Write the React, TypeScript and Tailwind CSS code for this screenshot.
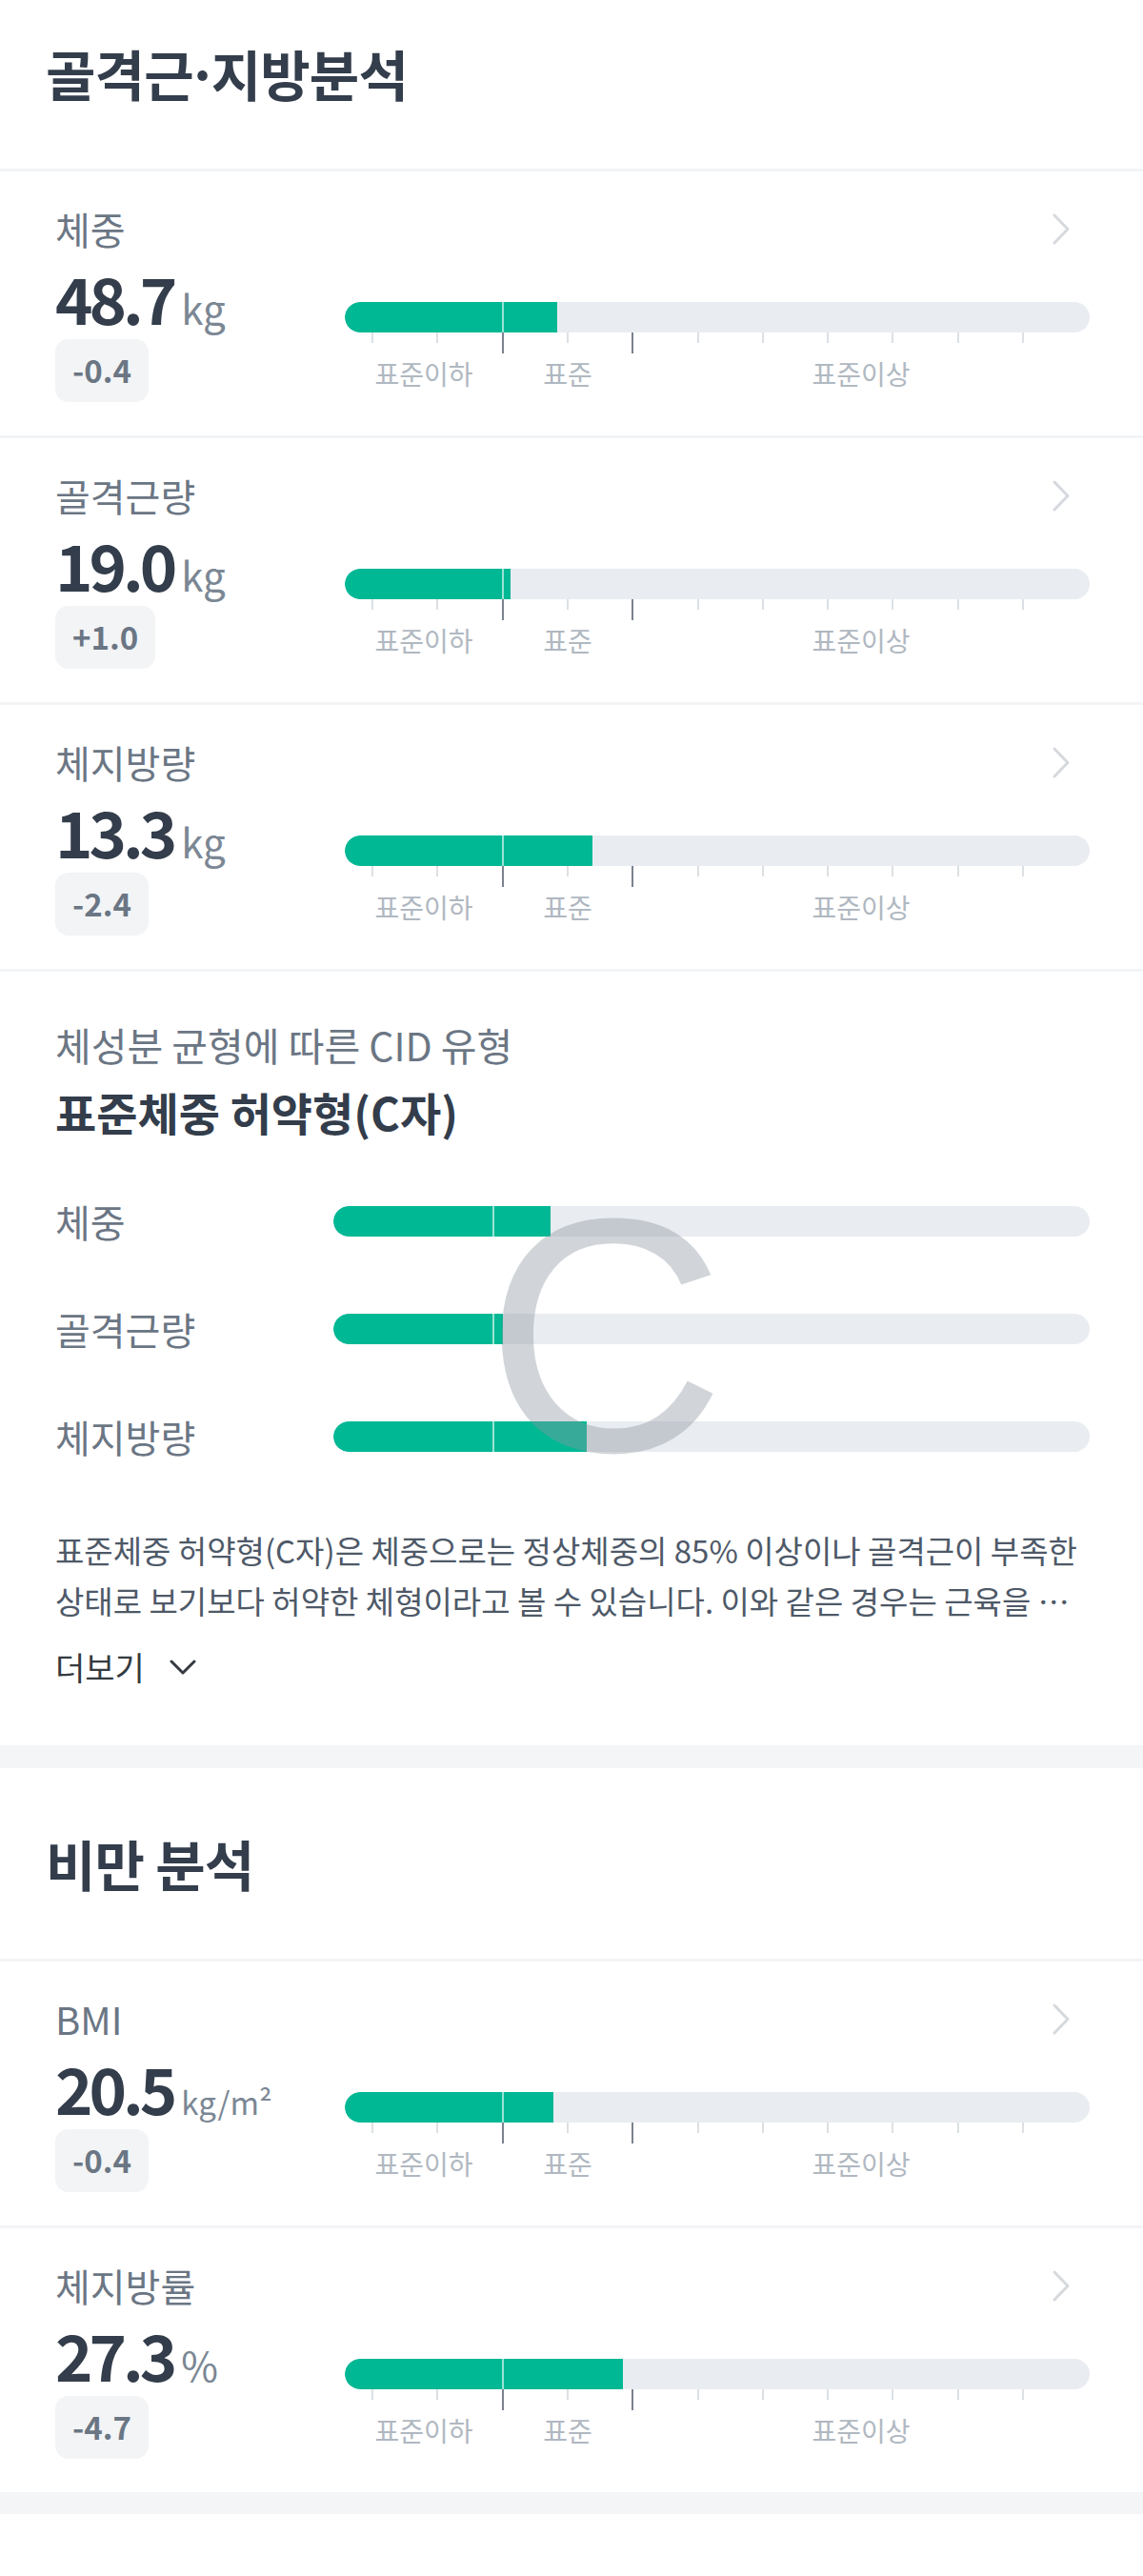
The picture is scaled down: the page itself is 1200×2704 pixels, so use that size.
import React from 'react';

interface Metric {
  label: string;
  value: string;
  unit: string;
  small?: boolean;
  diff: string;
  fill: number; // px of the 782px track
}

const bodyMetrics: Metric[] = [
  { label: '체중', value: '48.7', unit: 'kg', diff: '-0.4', fill: 223 },
  { label: '골격근량', value: '19.0', unit: 'kg', diff: '+1.0', fill: 174 },
  { label: '체지방량', value: '13.3', unit: 'kg', diff: '-2.4', fill: 260 },
];

const obesityMetrics: Metric[] = [
  { label: 'BMI', value: '20.5', unit: 'kg/m²', small: true, diff: '-0.4', fill: 219 },
  { label: '체지방률', value: '27.3', unit: '%', diff: '-4.7', fill: 292 },
];

const cidBars = [
  { label: '체중', fill: 228 },
  { label: '골격근량', fill: 178 },
  { label: '체지방량', fill: 266 },
];

// tick positions along the 782px track; long ones mark the standard range
const ticks = [29, 97, 166, 234, 302, 371, 439, 507, 575, 644, 712];
const longTicks = [166, 302];

function Chevron() {
  return (
    <svg width="20" height="35" viewBox="0 0 20 35" className="mr-[20px]">
      <path d="M3 3 L17 17.5 L3 32" fill="none" stroke="#d5d9de" strokeWidth="3" strokeLinecap="round" strokeLinejoin="round" />
    </svg>
  );
}

function Track({ fill, split }: { fill: number; split: number }) {
  return (
    <div className="relative h-[32px] w-full overflow-hidden rounded-full bg-[#e9ecf1]">
      <div className="h-full rounded-l-full bg-[#00b894]" style={{ width: fill }} />
      <div className="absolute top-0 h-full w-[2px] bg-white/60" style={{ left: split - 1 }} />
    </div>
  );
}

function MetricRow({ m }: { m: Metric }) {
  return (
    <div className="border-t-[3px] border-[#f2f4f6] pt-[41px] pb-[35px] pl-[58px] pr-[56px]">
      <div className="flex h-[38px] items-center justify-between">
        <span className="text-[40px] leading-[38px] text-[#6b7684]">{m.label}</span>
        <Chevron />
      </div>
      <div className="mt-[21px] flex">
        <div className="w-[304px]">
          <div className="flex h-[63px] items-baseline">
            <span className="text-[67px] leading-[63px] font-bold tracking-[-0.06em] text-[#333d4b]">{m.value}</span>
            <span
              className={
                m.small
                  ? 'ml-[8px] text-[33px] leading-none text-[#7b8794]'
                  : 'ml-[8px] text-[42px] leading-none text-[#7b8794]'
              }
            >
              {m.unit}
            </span>
          </div>
          <div className="mt-[13px] flex h-[66px] w-fit items-center rounded-[14px] bg-[#f2f4f6] px-[18px] text-[33px] font-bold text-[#6b7684]">
            {m.diff}
          </div>
        </div>
        <div className="flex-1 pt-[37px]">
          <Track fill={m.fill} split={166} />
          <svg width="782" height="22" className="block">
            {ticks.map((x) => {
              const long = longTicks.includes(x);
              return (
                <line
                  key={x}
                  x1={x}
                  x2={x}
                  y1={0}
                  y2={long ? 22 : 11}
                  stroke={long ? '#4e5968' : '#d1d6db'}
                  strokeWidth="1.5"
                />
              );
            })}
          </svg>
          <div className="mt-[7px] flex text-[28px] leading-[28px] text-[#b0b8c1]">
            <span className="w-[166px] text-center">표준이하</span>
            <span className="w-[136px] text-center">표준</span>
            <span className="flex-1 text-center">표준이상</span>
          </div>
        </div>
      </div>
    </div>
  );
}

export default function App() {
  return (
    <div className="min-h-screen w-full bg-white font-['Noto_Sans_CJK_KR',sans-serif]">
      {/* 골격근·지방분석 */}
      <div className="pt-[48px] pb-[73px] pl-[48px]">
        <h2 className="text-[57px] leading-[56px] font-bold tracking-[-0.015em] text-[#333d4b]">
          골격근<span className="mx-[-7px]">·</span>지방분석
        </h2>
      </div>
      {bodyMetrics.map((m) => (
        <MetricRow key={m.label} m={m} />
      ))}

      {/* CID type */}
      <section className="border-t-[3px] border-[#f2f4f6] pt-[56px] pb-[65px] pl-[58px] pr-[56px]">
        <p className="text-[41px] leading-[41px] text-[#6b7684]">체성분 균형에 따른 CID 유형</p>
        <p className="mt-[26px] text-[47px] leading-[47px] font-bold text-[#333d4b]">표준체중 허약형(C자)</p>

        <div className="relative mt-[35px]">
          {cidBars.map((b) => (
            <div key={b.label} className="flex h-[113px] items-center">
              <span className="w-[292px] text-[40px] leading-[40px] text-[#6b7684]">{b.label}</span>
              <div className="flex-1">
                <Track fill={b.fill} split={168} />
              </div>
            </div>
          ))}
          <span className="pointer-events-none absolute left-[451px] top-[2px] z-10 font-['Liberation_Sans',sans-serif] text-[350px] leading-none text-[#8b95a1]/40">
            C
          </span>
        </div>

        <p className="mt-[37px] break-keep text-[33px] leading-[53px] text-[#4e5968]">
          표준체중 허약형(C자)은 체중으로는 정상체중의 85% 이상이나 골격근이 부족한 상태로 보기보다 허약한 체형이라고 볼 수 있습니다. 이와 같은 경우는 근육을 …
        </p>
        <button className="mt-[26px] flex items-center text-[34px] leading-[34px] text-[#343a40]">
          더보기
          <svg width="28" height="16" viewBox="0 0 28 16" className="ml-[26px]">
            <path d="M2 2 L14 14 L26 2" fill="none" stroke="#343a40" strokeWidth="3" strokeLinecap="round" strokeLinejoin="round" />
          </svg>
        </button>
      </section>

      <div className="h-[24px] bg-[#f4f5f7]" />

      {/* 비만 분석 */}
      <div className="pt-[71px] pb-[73px] pl-[48px]">
        <h2 className="text-[57px] leading-[56px] font-bold tracking-[-0.015em] text-[#333d4b]">비만 분석</h2>
      </div>
      {obesityMetrics.map((m) => (
        <MetricRow key={m.label} m={m} />
      ))}
      <div className="h-[23px] bg-[#f4f5f7]" />
    </div>
  );
}
